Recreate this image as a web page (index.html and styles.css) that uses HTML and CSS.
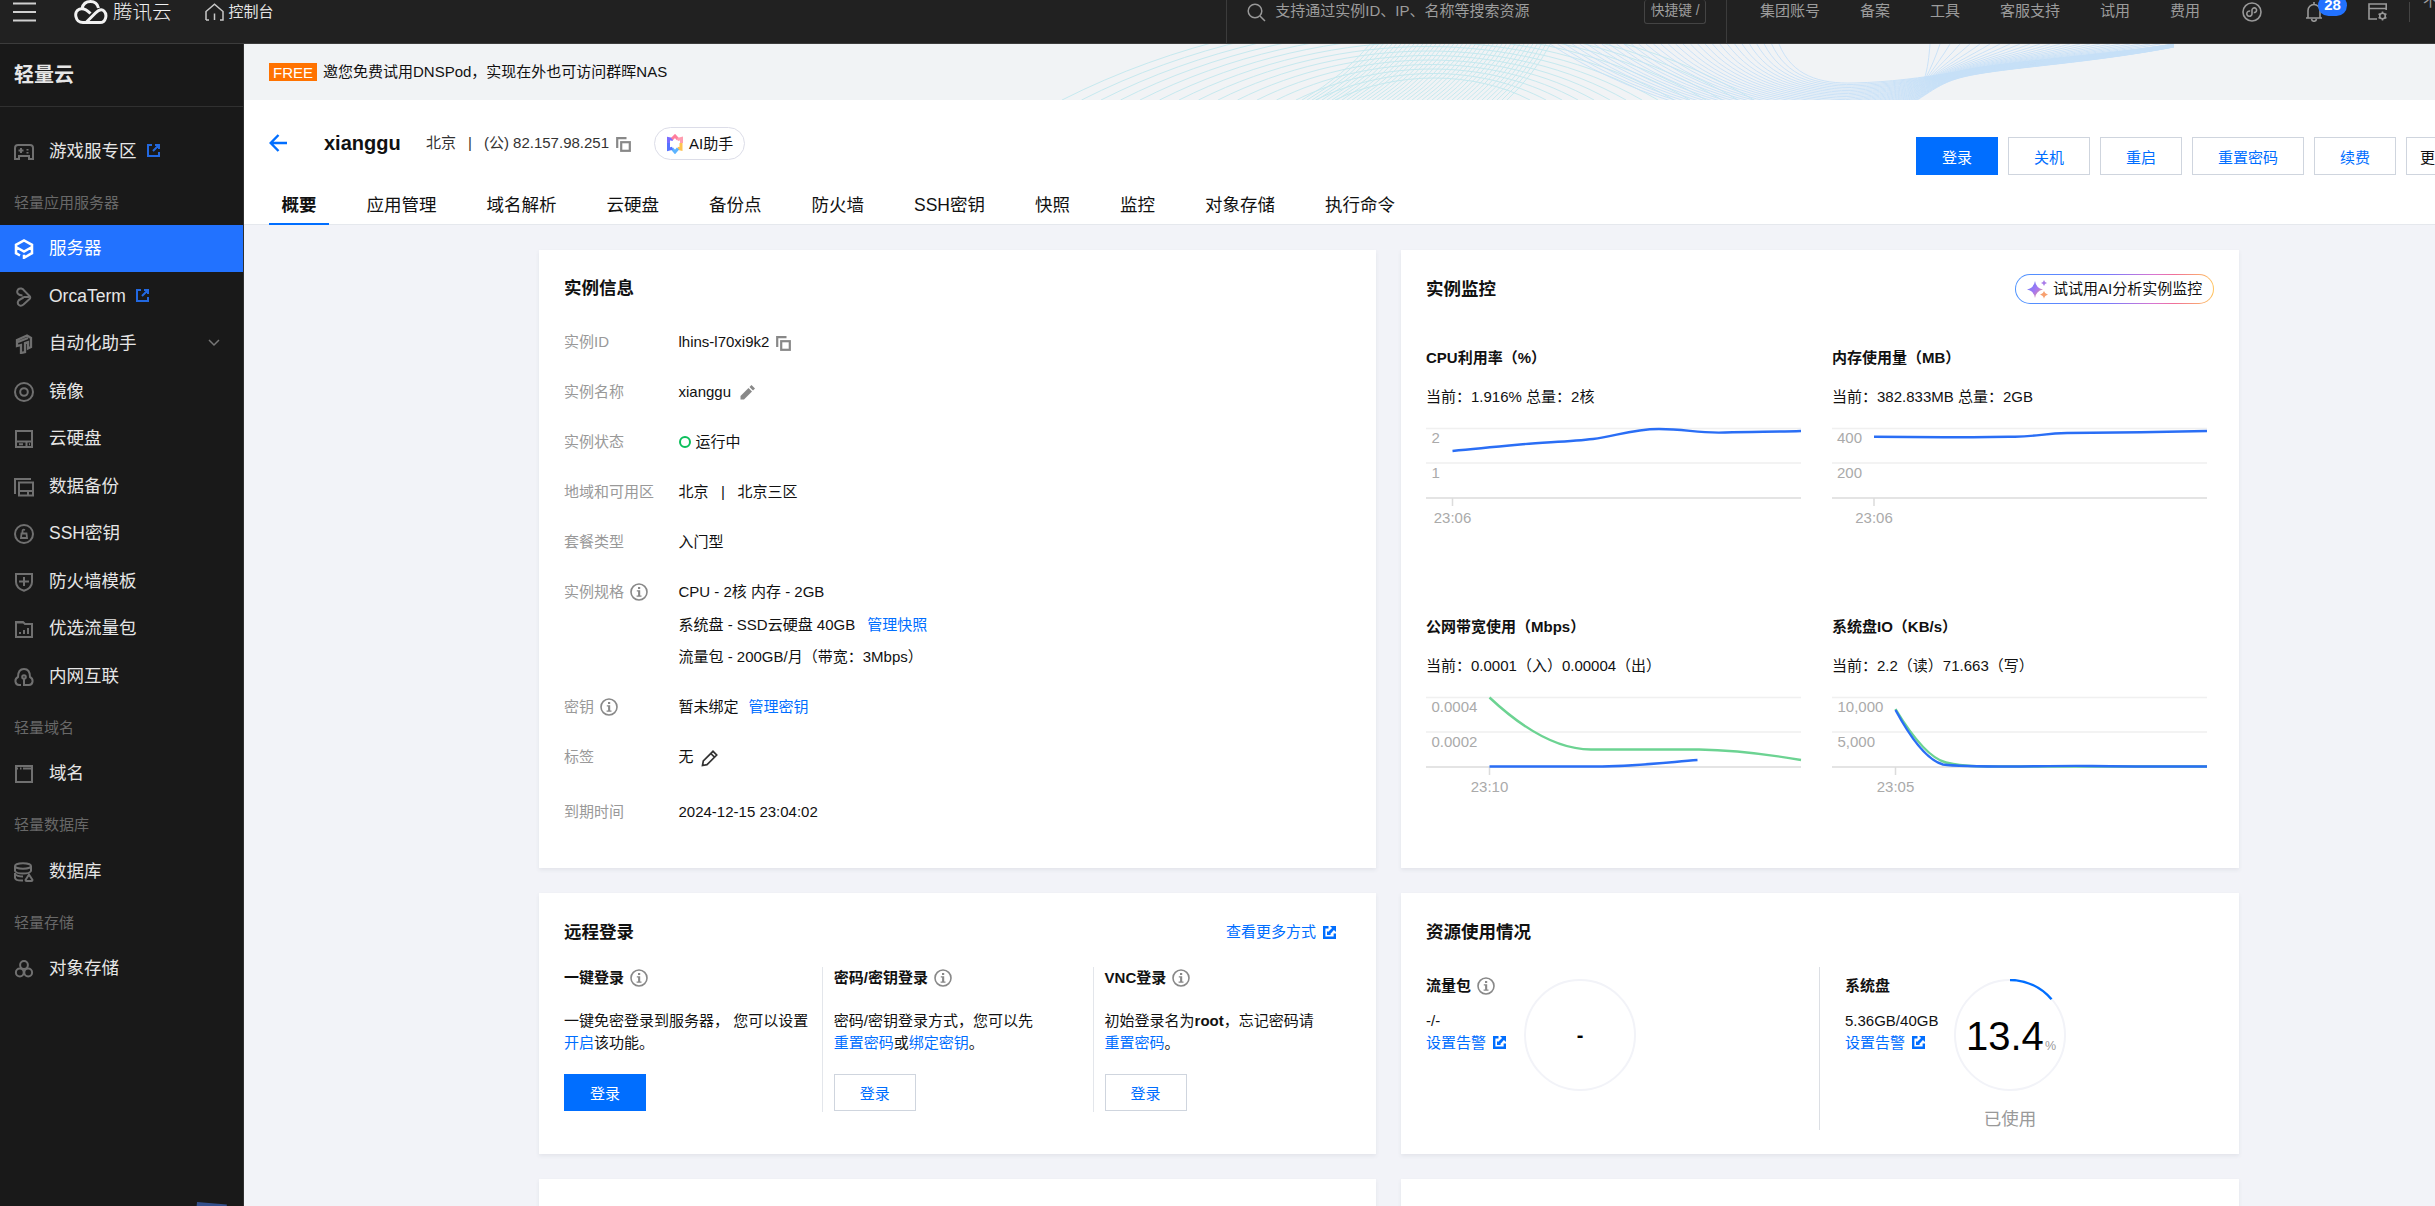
FILE: index.html
```html
<!DOCTYPE html>
<html lang="zh-CN">
<head>
    <meta charset="UTF-8">
    <meta name="viewport" content="width=device-width, initial-scale=1.0">
    <title>轻量云 - 控制台</title>
    <link rel="stylesheet" href="styles.css">
</head>
<body>
    <!-- shared icons -->
    <svg class="defs" width="0" height="0">
        <defs>
            <linearGradient id="gradAi" x1="0" y1="0" x2="1" y2="1">
                <stop offset="0" stop-color="#5b7cff"/>
                <stop offset="0.55" stop-color="#a878f0"/>
                <stop offset="1" stop-color="#ff9a5c"/>
            </linearGradient>
        </defs>
        <symbol id="i-info" viewBox="0 0 18 18">
            <circle cx="9" cy="9" r="8" fill="none" stroke="#888" stroke-width="1.6"/>
            <path d="M8 4h2.2v2H8zM6.8 7.3h3.4v5.2h1.3v1.3H6.6v-1.3h1.5V8.6H6.8z" fill="#888"/>
        </symbol>
        <symbol id="i-copy" viewBox="0 0 15 15">
            <path d="M1.2 11V1.2H10.5" fill="none" stroke="#888" stroke-width="2.2"/>
            <rect x="5.200" y="5.200" width="8.600" height="8.600" fill="none" stroke="#888" stroke-width="2.2"/>
        </symbol>
        <symbol id="i-out" viewBox="0 0 13 13">
            <path d="M5 1H1v11h11V8M8 1h4v4M12 1L6 7" fill="none" stroke="currentColor" stroke-width="2"/>
        </symbol>
        <symbol id="i-link" viewBox="0 0 13 13">
            <path d="M5.5 1.2H1.2v10.6h10.6V7.5" fill="none" stroke="currentColor" stroke-width="2.4"/>
            <path d="M7 0h6v6l-2.1-2.1-3.6 4L7.8 9H4V5.2l1.2.6 3.9-3.7z" fill="currentColor"/>
        </symbol>
    </svg>

    <header class="topbar">
        <div class="topbar-left">
            <svg class="burger" width="23" height="20" viewBox="0 0 23 20"><path d="M0 1.5h23M0 10h23M0 18.5h23" stroke="#d0d0d0" stroke-width="2"/></svg>
            <svg class="logo" width="34" height="25" viewBox="0 0 34 25"><path d="M8 8.5C9 4 12.5 1.5 16.5 1.5s7 2.5 8 6.5M12 22.5L21.500 13c3-3 6-4.500 8.500-2 3.500 3.500 2 11.500-4 11.500H9C1 22.500-.5 11.500 5 9.300c4.500-1.800 8 .7 11.500 4.200" fill="none" stroke="#f2f2f2" stroke-width="3" stroke-linejoin="round"/></svg>
            <span class="brand">腾讯云</span>
            <svg class="home" width="19" height="18" viewBox="0 0 19 18"><path d="M1 17V8.500L9.500 1.200 18 8.500V17h-3M1 17h3M9.500 10.500V17" fill="none" stroke="#c8c8c8" stroke-width="1.500"/></svg>
            <span class="console">控制台</span>
        </div>
        <div class="search">
            <svg width="19" height="19" viewBox="0 0 19 19"><circle cx="8" cy="8" r="6.800" fill="none" stroke="#999" stroke-width="1.500"/><path d="M13 13l5 5" stroke="#999" stroke-width="1.500"/></svg>
            <span class="search-text">支持通过实例ID、IP、名称等搜索资源</span>
            <span class="hotkey">快捷键 /</span>
        </div>
        <nav class="topnav">
            <span>集团账号</span>
            <span>备案</span>
            <span>工具</span>
            <span>客服支持</span>
            <span>试用</span>
            <span>费用</span>
        </nav>
        <div class="tools">
            <svg width="20" height="20" viewBox="0 0 20 20" fill="none" stroke="#999" stroke-width="1.600"><circle cx="10" cy="10" r="9"/><path d="M8.200 9.200a2.600 2.600 0 1 0 1.800 2.500V7.800a2.300 2.300 0 1 1 1.800 2.600"/></svg>
            <div class="bell">
                <svg width="18" height="20" viewBox="0 0 18 20" fill="none" stroke="#999" stroke-width="1.600"><path d="M1 16h16M3 16V8.500a6 6 0 0 1 12 0V16M9 0v3M6.500 17c.5 3 4.500 3 5 0"/></svg>
                <span class="badge">28</span>
            </div>
            <svg width="20" height="18" viewBox="0 0 20 18" fill="none" stroke="#999" stroke-width="1.600"><path d="M18.200 7V1H1v15h8M1 5.500h17"/><circle cx="14.500" cy="13" r="2.800"/><path d="M14.500 8.500v1.700M14.500 15.800v1.700M10.600 10.800l1.500.9M16.900 14.400l1.500.8M10.600 15.200l1.500-.9M16.900 11.600l1.500-.8"/></svg>
            <i class="sep"></i>
            <span class="clip">不</span>
        </div>
    </header>

    <div class="layout">
        <aside class="sidebar">
            <div class="side-title">轻量云</div>
            <ul class="menu">
                <li>
                    <svg viewBox="0 0 20 20"><path d="M4 3h12q3 0 3 3v11h-4v-3H5v3H1V6q0-3 3-3zM4.500 8.500h5M7 6v5M13.500 7v1.500M13.500 10v1.500"/></svg>
                    <span>游戏服专区</span><svg class="out"><use href="#i-out"/></svg>
                </li>
                <li class="group">轻量应用服务器</li>
                <li class="active">
                    <svg viewBox="0 0 20 20"><path d="M6 16.500l-4-2.300V5.800L10 1.500l8 4.300v8.400l-8 4.600v-3M2 8l8 4.500L18 8" stroke-width="2.500"/></svg>
                    <span>服务器</span>
                </li>
                <li>
                    <svg viewBox="0 0 20 20"><path d="M8.500 8.500C4 8.500 2 5.500 4 2.500c2-2 5-1 6.500 1.500l5 5q1.500 1.500 0 3l-6 5.500c-3 2.500-6.500.5-5.500-3 1-3 4.500-2 6-5M10 10h5"/></svg>
                    <span>OrcaTerm</span><svg class="out"><use href="#i-out"/></svg>
                </li>
                <li>
                    <svg viewBox="0 0 20 20"><path d="M3 6l10-4.500L17 4v9l-3 1.500V8l-3 1v9l-4 1v-8l-4 1zM4 8l10-4"  stroke-width="2.300"/></svg>
                    <span>自动化助手</span>
                    <svg class="arrow" viewBox="0 0 12 8"><path d="M1 1l5 5 5-5"/></svg>
                </li>
                <li>
                    <svg viewBox="0 0 20 20"><circle cx="10" cy="10" r="9"/><circle cx="10" cy="10" r="3.800"/></svg>
                    <span>镜像</span>
                </li>
                <li>
                    <svg viewBox="0 0 20 20"><path d="M2 2h16v16H2zM2 12.500h16M12.500 13v5M5 15.300h4M15 15.300h1"/></svg>
                    <span>云硬盘</span>
                </li>
                <li>
                    <svg viewBox="0 0 20 20"><path d="M1 17V2h16M5 5.500h14v13H5zM5 14h14M14 14v4"/></svg>
                    <span>数据备份</span>
                </li>
                <li>
                    <svg viewBox="0 0 20 20"><circle cx="10" cy="10" r="9"/><path d="M7.500 9.500h5L13 14H7zM8.500 9V7q0-2 2.500-1" stroke-width="1.800"/></svg>
                    <span>SSH密钥</span>
                </li>
                <li>
                    <svg viewBox="0 0 20 20"><path d="M2 2h16v8q0 6-8 8.800Q2 16 2 10zM5 9.500h10M10 5v9"/></svg>
                    <span>防火墙模板</span>
                </li>
                <li>
                    <svg viewBox="0 0 20 20"><path d="M2 18V3h7l2 2h7v13zM2 3.500h7M6 15v-2M10 15v-4M14 15V9"/></svg>
                    <span>优选流量包</span>
                </li>
                <li>
                    <svg viewBox="0 0 20 20"><path d="M7 18H5c-4 0-5-6-1-8 0-5 2-8 6-8s6 3 6 8c4 2 3 8-1 8h-5v-7"/><circle cx="10" cy="10" r="1.800"/></svg>
                    <span>内网互联</span>
                </li>
                <li class="group">轻量域名</li>
                <li>
                    <svg viewBox="0 0 20 20"><path d="M2 2h16v16H2zM2 4.500h2M6 4.500h1.500M9 4.500h9"/></svg>
                    <span>域名</span>
                </li>
                <li class="group">轻量数据库</li>
                <li>
                    <svg viewBox="0 0 20 20"><ellipse cx="9" cy="4" rx="8" ry="2.800"/><path d="M1 4v5q1 2.500 8 2.500T17 9V4M1 11v5q1 3 8 2.500M1 12q2 2.500 8 2.500M15 12.500l-3.500 5.500q0 1 1 1h5q1 0 1-1z"/></svg>
                    <span>数据库</span>
                </li>
                <li class="group">轻量存储</li>
                <li>
                    <svg viewBox="0 0 20 20"><circle cx="10" cy="6" r="3.900"/><circle cx="5.800" cy="13.500" r="3.900"/><circle cx="14.200" cy="13.500" r="3.900"/></svg>
                    <span>对象存储</span>
                </li>
            </ul>
            <div class="float-tip"></div>
        </aside>

        <main class="main">
            <div class="banner">
                <svg id="waves" class="waves" width="1150" height="56" viewBox="1050 44 1150 56"></svg>
                <span class="free">FREE</span>
                <span class="banner-text">邀您免费试用DNSPod，实现在外也可访问群晖NAS</span>
            </div>

            <div class="page-head">
                <div class="head-row">
                    <svg class="back" width="18" height="18" viewBox="0 0 18 18"><path d="M18 9H2M9.500 1L1.700 9l7.800 8" fill="none" stroke="#006eff" stroke-width="2.400"/></svg>
                    <h1>xianggu</h1>
                    <div class="region"><span>北京</span><span>|</span><span>(公) 82.157.98.251</span></div>
                    <svg class="copy"><use href="#i-copy"/></svg>
                    <div class="ai-btn">
                        <svg width="18" height="20" viewBox="0 0 18 20" fill="none" stroke-width="3">
                            <path d="M2.500 9V4.500L7 5.500" stroke="#7a6cff"/><path d="M6 5l3-3 3 3.200" stroke="#ff7d9c"/>
                            <path d="M11.500 5.500l4-1V9" stroke="#ff9db0"/><path d="M15 9v6l-3.500-.8" stroke="#ffc24f"/>
                            <path d="M12 14.500l-3 3.500-3-3.500" stroke="#5cb4ff"/><path d="M6.500 14.300l-4 1V9" stroke="#5673ff"/>
                        </svg>
                        <span>AI助手</span>
                    </div>
                    <div class="actions">
                        <button class="btn primary">登录</button>
                        <button class="btn">关机</button>
                        <button class="btn">重启</button>
                        <button class="btn">重置密码</button>
                        <button class="btn">续费</button>
                        <button class="btn more">更</button>
                    </div>
                </div>
                <div class="tabs">
                    <span class="tab on">概要</span>
                    <span class="tab">应用管理</span>
                    <span class="tab">域名解析</span>
                    <span class="tab">云硬盘</span>
                    <span class="tab">备份点</span>
                    <span class="tab">防火墙</span>
                    <span class="tab">SSH密钥</span>
                    <span class="tab">快照</span>
                    <span class="tab">监控</span>
                    <span class="tab">对象存储</span>
                    <span class="tab">执行命令</span>
                </div>
            </div>

            <div class="cards">
                <section class="card info-card">
                    <h3>实例信息</h3>
                    <div class="row"><label>实例ID</label><div>lhins-l70xi9k2<svg class="copy"><use href="#i-copy"/></svg></div></div>
                    <div class="row"><label>实例名称</label><div>xianggu<svg class="pen" width="15" height="15" viewBox="0 0 15 15"><path d="M.5 14.500V11l8-8L12 6.500l-8 8zM9.500 2L11.500 0 15 3.500l-2 2z" fill="#888"/></svg></div></div>
                    <div class="row"><label>实例状态</label><div><i class="dot"></i>运行中</div></div>
                    <div class="row"><label>地域和可用区</label><div>北京 &nbsp; | &nbsp; 北京三区</div></div>
                    <div class="row"><label>套餐类型</label><div>入门型</div></div>
                    <div class="row spec"><label>实例规格<svg class="info"><use href="#i-info"/></svg></label>
                        <div>
                            <p>CPU - 2核 内存 - 2GB</p>
                            <p>系统盘 - SSD云硬盘 40GB<a class="gap-link">管理快照</a></p>
                            <p>流量包 - 200GB/月（带宽：3Mbps）</p>
                        </div>
                    </div>
                    <div class="row"><label>密钥<svg class="info"><use href="#i-info"/></svg></label><div>暂未绑定<a class="key-link">管理密钥</a></div></div>
                    <div class="row tag"><label>标签</label><div>无<svg class="pen2" width="17" height="17" viewBox="0 0 17 17"><path d="M1.500 15.500l.8-4.500L12 1.300l3.700 3.700L6 14.700zM9.800 3.500l3.700 3.700" fill="none" stroke="#333" stroke-width="1.700"/></svg></div></div>
                    <div class="row"><label>到期时间</label><div>2024-12-15 23:04:02</div></div>
                </section>

                <section class="card monitor-card">
                    <div class="card-head">
                        <h3>实例监控</h3>
                        <div class="ai-pill">
                            <svg width="21" height="19" viewBox="0 0 21 19"><path d="M8 1q1 7 8 8.500-7 1.500-8 8.500-1-7-8-8.500Q7 8 8 1z" fill="url(#gradAi)"/><path d="M17 0q.5 2.500 3 3-2.500.5-3 3-.5-2.500-3-3 2.500-.5 3-3z" fill="#a97be8"/><path d="M17 11q.7 3 4 3.800-3.300.7-4 3.900-.7-3.200-4-3.900 3.300-.8 4-3.800z" fill="#f7a06f"/></svg>
                            <span>试试用AI分析实例监控</span>
                        </div>
                    </div>
                    <div class="charts">
                        <div class="chart">
                            <h4>CPU利用率（%）</h4>
                            <p>当前：1.916% 总量：2核</p>
                            <svg width="376" height="110" viewBox="0 0 376 110">
                                <path class="grid" d="M0 8.500h375M0 43h375"/><path class="axis" d="M0 78h375M26.500 78v8"/>
                                <text x="5.500" y="23">2</text><text x="5.500" y="58">1</text><text x="26.500" y="103" text-anchor="middle">23:06</text>
                                <path class="blue" d="M26.500 31C50 28.500 72 26.500 94 24.500S145 21.500 167 19 205 9 233 9s38 4.500 66 3.500 50-.5 76-1.500"/>
                            </svg>
                        </div>
                        <div class="chart">
                            <h4>内存使用量（MB）</h4>
                            <p>当前：382.833MB 总量：2GB</p>
                            <svg width="376" height="110" viewBox="0 0 376 110">
                                <path class="grid" d="M0 8.500h375M0 43h375"/><path class="axis" d="M0 78h375M42 78v8"/>
                                <text x="5" y="23">400</text><text x="5" y="58">200</text><text x="42" y="103" text-anchor="middle">23:06</text>
                                <path class="blue" d="M42 16.700L112 17.300C140 17.300 160 17 183 16.700S212 13.500 235 13L309 12.200 375 11"/>
                            </svg>
                        </div>
                        <div class="chart">
                            <h4>公网带宽使用（Mbps）</h4>
                            <p>当前：0.0001（入）0.00004（出）</p>
                            <svg width="376" height="110" viewBox="0 0 376 110">
                                <path class="grid" d="M0 8.500h375M0 43h375"/><path class="axis" d="M0 78h375M63.500 78v8"/>
                                <text x="5.500" y="23">0.0004</text><text x="5.500" y="58">0.0002</text><text x="63.500" y="103" text-anchor="middle">23:10</text>
                                <path class="green" d="M63.500 8.500C95 38 130 60.500 165 60.500H273C310 61 340 65 375 71"/>
                                <path class="blue" d="M63.500 77.500H170C205 77.500 235 74 271.500 71"/>
                            </svg>
                        </div>
                        <div class="chart">
                            <h4>系统盘IO（KB/s）</h4>
                            <p>当前：2.2（读）71.663（写）</p>
                            <svg width="376" height="110" viewBox="0 0 376 110">
                                <path class="grid" d="M0 8.500h375M0 43h375"/><path class="axis" d="M0 78h375M63.500 78v8"/>
                                <text x="5.500" y="23">10,000</text><text x="5.500" y="58">5,000</text><text x="63.500" y="103" text-anchor="middle">23:05</text>
                                <path class="green" d="M63.500 20C78 44 96 69 114 73.500S150 77.500 180 77.500H375"/>
                                <path class="blue" d="M63.500 21C77 46 94 71 111 75.500 125 77.500 160 77.500 180 77.500S230 76.500 260 77 330 77.500 375 77.500"/>
                            </svg>
                        </div>
                    </div>
                </section>

                <section class="card">
                    <div class="card-head">
                        <h3>远程登录</h3>
                        <a class="more-link">查看更多方式<svg class="ext"><use href="#i-link"/></svg></a>
                    </div>
                    <div class="logins">
                        <div class="login">
                            <h4>一键登录<svg class="info"><use href="#i-info"/></svg></h4>
                            <p>一键免密登录到服务器， 您可以设置<br><a>开启</a>该功能。</p>
                            <button class="btn primary">登录</button>
                        </div>
                        <div class="login">
                            <h4>密码/密钥登录<svg class="info"><use href="#i-info"/></svg></h4>
                            <p>密码/密钥登录方式，您可以先<br><a>重置密码</a>或<a>绑定密钥</a>。</p>
                            <button class="btn">登录</button>
                        </div>
                        <div class="login">
                            <h4>VNC登录<svg class="info"><use href="#i-info"/></svg></h4>
                            <p>初始登录名为<b>root</b>，忘记密码请<br><a>重置密码</a>。</p>
                            <button class="btn">登录</button>
                        </div>
                    </div>
                </section>

                <section class="card">
                    <div class="card-head"><h3>资源使用情况</h3></div>
                    <div class="usage">
                        <div class="use-item">
                            <div class="use-text">
                                <h4>流量包<svg class="info"><use href="#i-info"/></svg></h4>
                                <p>-/-<br><a>设置告警<svg class="ext"><use href="#i-link"/></svg></a></p>
                            </div>
                            <div class="ring-box">
                                <svg width="112" height="112" viewBox="0 0 112 112">
                                    <circle class="ring" cx="56" cy="56" r="55"/>
                                    <text class="dash" x="56" y="63" text-anchor="middle">-</text>
                                </svg>
                            </div>
                        </div>
                        <div class="use-item">
                            <div class="use-text">
                                <h4>系统盘</h4>
                                <p>5.36GB/40GB<br><a>设置告警<svg class="ext"><use href="#i-link"/></svg></a></p>
                            </div>
                            <div class="ring-box">
                                <svg width="112" height="112" viewBox="0 0 112 112">
                                    <circle class="ring" cx="56" cy="56" r="55"/>
                                    <path class="ring-on" d="M56 1A55 55 0 0 1 97.500 20.200"/>
                                    <text class="num" x="12" y="71">13.4</text>
                                    <text class="pct" x="91" y="71">%</text>
                                </svg>
                                <span class="used">已使用</span>
                            </div>
                        </div>
                    </div>
                </section>

                <section class="card"></section>
                <section class="card"></section>
            </div>
        </main>
    </div>

    <script src="script.js"></script>
</body>
</html>
```

FILE: styles.css
```css
* {
    box-sizing: border-box;
}

body {
    margin: 0;
    width: 2435px;
    height: 1206px;
    overflow: hidden;
    background-color: #f2f3f8;
    font-family: "Liberation Sans", "Noto Sans CJK SC", sans-serif;
    font-size: 15px;
    line-height: 22px;
    color: #111;
}

h1, h3, h4, p, ul {
    margin: 0;
    padding: 0;
}

a {
    color: #006eff;
}

.defs {
    position: absolute;
}

/* top bar */
.topbar {
    display: flex;
    height: 44px;
    background-color: #212121;
    border-bottom: 1px solid #3c3c3c;
    color: #9c9c9c;
    white-space: nowrap;
}

.topbar-left {
    display: flex;
    align-items: center;
    width: 1227px;
    height: 24px;
    padding-left: 13px;
}

.logo {
    margin-left: 38px;
}

.brand {
    margin-left: 5px;
    font-size: 19.5px;
    font-weight: 300;
    color: #f0f0f0;
}

.home {
    margin-left: 33px;
}

.console {
    margin-left: 5px;
    color: #e4e4e4;
}

.search {
    display: flex;
    align-items: flex-start;
    width: 501px;
    height: 43px;
    padding-left: 20px;
    border-left: 1px solid #3c3c3c;
    border-right: 1px solid #3c3c3c;
}

.search > svg {
    margin-top: 3px;
}

.search-text {
    width: 369px;
    margin-left: 9px;
}

.hotkey {
    width: 62px;
    height: 24px;
    border: 1px solid #444;
    border-top: 0;
    border-radius: 3px;
    font-size: 13.75px;
    line-height: 21px;
    text-align: center;
}

.topnav {
    display: flex;
    gap: 40px;
    padding-left: 33px;
}

.tools {
    display: flex;
    align-items: center;
    height: 24px;
    margin-left: 42px;
}

.bell {
    position: relative;
    width: 18px;
    height: 20px;
    margin: 0 45px 0 43px;
}

.badge {
    position: absolute;
    left: 13px;
    top: -7px;
    width: 29px;
    height: 21px;
    border-radius: 11px;
    background-color: #2272ff;
    color: #fff;
    font-weight: bold;
    line-height: 19px;
    text-align: center;
}

.sep {
    width: 1px;
    height: 20px;
    margin-left: 21px;
    background-color: #444;
}

.clip {
    width: 12px;
    margin: -22px 0 0 13px;
    overflow: hidden;
}

/* sidebar */
.layout {
    display: flex;
    height: 1162px;
    overflow: hidden;
}

.sidebar {
    position: relative;
    flex: none;
    width: 244px;
    overflow: hidden;
    background-color: #191919;
    border-right: 1px solid #303030;
    color: #e6e6e6;
}

.side-title {
    height: 63px;
    padding-left: 14px;
    border-bottom: 1px solid #303030;
    font-size: 20px;
    font-weight: bold;
    line-height: 62px;
}

.menu {
    padding-top: 20px;
    list-style: none;
}

.menu li {
    display: flex;
    align-items: center;
    height: 47.5px;
    padding: 0 23px 0 14px;
    font-size: 17.5px;
}

.menu li > svg:first-child {
    width: 20px;
    height: 20px;
    margin: 2px 15px 0 0;
    fill: none;
    stroke: #707070;
    stroke-width: 2;
}

.menu li.group {
    height: 50px;
    padding-top: 6px;
    font-size: 15px;
    color: #686868;
}

.menu li.active {
    background-color: #2272ff;
    color: #fff;
}

.menu li.active > svg:first-child {
    stroke: #fff;
}

.menu .out {
    width: 13px;
    height: 13px;
    margin-left: 10px;
    color: #2268e0;
}

.menu .arrow {
    width: 12px;
    height: 8px;
    margin-left: auto;
    fill: none;
    stroke: #777;
    stroke-width: 1.5;
}

.float-tip {
    position: absolute;
    left: 197px;
    top: 1158px;
    width: 30px;
    height: 20px;
    background-color: #34508c;
    transform: rotate(5deg);
    transform-origin: 0 0;
}

/* banner */
.main {
    flex: 1;
    min-width: 0;
}

.banner {
    position: relative;
    display: flex;
    align-items: center;
    height: 56px;
    padding-left: 25px;
    background-color: #f1f3f5;
}

.waves {
    position: absolute;
    left: 806px;
    top: 0;
    fill: none;
}

.waves .teal {
    stroke: #c6e9ef;
}

.waves .sky {
    stroke: #c6e0f7;
    stroke-width: 0.9;
}

.free {
    width: 48px;
    height: 18px;
    margin-right: 6px;
    background-color: #ff7200;
    color: #fff;
    line-height: 19px;
    text-align: center;
}

/* page head */
.page-head {
    height: 125px;
    padding-left: 25px;
    background-color: #fff;
    border-bottom: 1px solid #e5e8ed;
}

.head-row {
    display: flex;
    align-items: center;
    height: 85px;
    white-space: nowrap;
}

.head-row > * {
    flex: none;
}

h1 {
    width: 102px;
    margin-left: 37px;
    font-size: 20px;
}

.region {
    display: flex;
    gap: 12px;
    width: 184px;
    margin-right: 6px;
    color: #333;
}

.copy {
    width: 15px;
    height: 15px;
}

.head-row .copy {
    margin-top: 3px;
}

.ai-btn {
    display: flex;
    align-items: center;
    width: 91px;
    height: 33px;
    margin: 2px 0 0 23px;
    padding-left: 11px;
    border: 1px solid #dcdde8;
    border-radius: 17px;
}

.ai-btn span {
    margin-left: 5px;
}

.actions {
    display: flex;
    gap: 10px;
    margin: 27px 0 0 1171px;
}

.btn {
    flex: none;
    height: 38px;
    padding: 0 25px;
    border: 1px solid #cfd5de;
    background-color: #fff;
    color: #006eff;
    font-family: inherit;
    font-size: 15px;
}

.btn.primary {
    border-color: #006eff;
    background-color: #006eff;
    color: #fff;
}

.btn.more {
    width: 60px;
    padding: 0 13px;
    color: #111;
    text-align: left;
}

.tabs {
    display: flex;
    gap: 25px;
}

.tab {
    height: 40px;
    padding: 0 12.5px;
    font-size: 17.5px;
    line-height: 40px;
}

.tab.on {
    border-bottom: 2px solid #006eff;
    font-weight: bold;
}

/* cards */
.cards {
    display: grid;
    grid-template-columns: 837px 838px;
    grid-template-rows: 618px 261px 261px;
    gap: 25px;
    padding: 25px 0 0 295px;
}

.card {
    padding: 25px;
    background-color: #fff;
    box-shadow: 0 2px 4px rgba(54, 58, 80, 0.08);
}

h3 {
    font-size: 17.5px;
    line-height: 26px;
}

h4 {
    font-size: 15px;
    line-height: 22px;
}

.row {
    display: flex;
    margin-bottom: 28px;
}

h3 + .row {
    margin-top: 30px;
}

.row label {
    display: flex;
    align-items: center;
    width: 114.5px;
    height: 22px;
    color: #999;
}

.row > div {
    display: flex;
    align-items: center;
}

.row .copy {
    margin: 3px 0 0 7px;
}

.info {
    width: 18px;
    height: 18px;
    margin-left: 6px;
}

.pen {
    margin-left: 9px;
}

.pen2 {
    margin: 3px 0 0 7px;
}

.dot {
    width: 12px;
    height: 12px;
    margin-right: 5px;
    border: 2px solid #0abf5b;
    border-radius: 50%;
}

.row.spec > div {
    display: block;
}

.spec p + p {
    margin-top: 10.5px;
}

.row.tag {
    margin-bottom: 33px;
}

.gap-link {
    margin-left: 12px;
}

.key-link {
    margin-left: 10px;
}

.card-head {
    display: flex;
    align-items: center;
    justify-content: space-between;
    height: 28px;
}

.ai-pill {
    display: flex;
    align-items: center;
    width: 199px;
    height: 30px;
    padding-left: 11px;
    border: 1px solid transparent;
    border-radius: 15px;
    background: linear-gradient(#fff, #fff) padding-box, linear-gradient(90deg, #4d94ff, #6e7bff 45%, #d975d0 70%, #f0709a 80%, #ffc45c) border-box;
}

.ai-pill span {
    margin-left: 5px;
    white-space: nowrap;
}

.charts {
    display: grid;
    grid-template-columns: 406px 376px;
    grid-auto-rows: 268.5px;
    padding-top: 44px;
}

.chart p {
    margin: 17px 0 12px;
}

.chart svg {
    display: block;
}

.chart text {
    font-size: 15px;
    fill: #aaa;
}

.grid {
    stroke: #f0f0f0;
    stroke-width: 1.5;
}

.axis {
    stroke: #dcdcdc;
    stroke-width: 1.5;
}

.blue, .green {
    fill: none;
    stroke: #2a6ef5;
    stroke-width: 2.4;
}

.green {
    stroke: #6cd392;
}

.more-link {
    display: flex;
    align-items: center;
    margin-right: 15px;
}

.ext {
    width: 13px;
    height: 13px;
    margin-left: 7px;
}

.logins {
    display: flex;
    margin-top: 21px;
}

.login {
    flex: none;
    width: 269.8px;
    height: 145px;
    padding-right: 10px;
    white-space: nowrap;
}

.login + .login {
    margin-left: -12px;
    padding-left: 11px;
    width: 282.8px;
    border-left: 1px solid #e3e6eb;
}

.login + .login:last-child {
    width: 250px;
}

.login h4, .use-text h4 {
    display: flex;
    align-items: center;
}

.login p {
    margin: 21px 0 20px;
}

.login .btn {
    width: 82px;
    height: 37px;
}

/* usage rings */
.usage {
    display: flex;
    height: 163px;
    margin-top: 21px;
}

.use-item {
    display: flex;
    width: 393px;
}

.use-item + .use-item {
    padding-left: 25px;
    border-left: 1px solid #dcdfe4;
}

.use-text {
    width: 98px;
    padding-top: 8px;
    white-space: nowrap;
}

.use-item + .use-item .use-text {
    width: 109px;
}

.use-text p {
    margin-top: 13px;
}

.use-text .ext {
    vertical-align: -1px;
}

.ring-box {
    display: flex;
    flex-direction: column;
    align-items: center;
    padding-top: 12px;
}

.ring {
    fill: none;
    stroke: #f2f3f8;
    stroke-width: 2;
}

.ring-on {
    fill: none;
    stroke: #006eff;
    stroke-width: 2.5;
}

.dash {
    font-size: 20px;
    font-weight: bold;
}

.num {
    font-size: 40px;
}

.pct {
    font-size: 12.5px;
    fill: #999;
}

.used {
    margin-top: 17px;
    font-size: 17.5px;
    color: #999;
}
```

FILE: script.js
```js
// Thin line pattern behind the banner
var waves = document.getElementById('waves');
var ns = 'http://www.w3.org/2000/svg';

function addLine(cls, d) {
    var p = document.createElementNS(ns, 'path');
    p.setAttribute('class', cls);
    p.setAttribute('d', d);
    waves.appendChild(p);
}

function mix(a, b, t) {
    return (a + (b - a) * t).toFixed(1);
}

var i, t;

// arches
for (i = 0; i < 15; i++) {
    var left = 1335 - i * 19.5;
    var right = 1530 + i * 16;
    var cy = (78 - i * 4.5 - 25) / 0.75;
    addLine('teal', 'M' + left + ' 100C' + mix(left, 1436, 0.6) + ' ' + cy + ' ' + mix(right, 1436, 0.6) + ' ' + cy + ' ' + right + ' 100');
}

// steep lines under the arches
for (i = 0; i < 42; i++) {
    addLine('teal', 'M' + (1302 + i * 5) + ' 100Q' + (1345 + i * 4.6) + ' 75 ' + (1370 + i * 4.4) + ' 44');
}

// descent into the trough, then up to the tip
for (i = 0; i < 32; i++) {
    t = i / 31;
    addLine('sky', 'M' + mix(1779, 1550, t) + ' 44C' + mix(1792, 1620, t) + ' ' + mix(76, 90, t) + ' ' + mix(1820, 1720, t) + ' ' + mix(84, 125, t) + ' ' +
        mix(1854, 1830, t) + ' ' + mix(83, 130, t) + 'C' + mix(1890, 1910, t) + ' ' + mix(82, 120, t) + ' 1920 ' + mix(78, 90, t) + ' 1956 ' + mix(72, 79, t) +
        'C1990 ' + mix(63, 68, t) + ' 2080 ' + mix(58, 65, t) + ' 2174 ' + mix(44, 47, t));
}

// fan on the right
for (i = 0; i < 24; i++) {
    addLine('sky', 'M' + (1930 + i * 10) + ' 44C' + (1929 + i * 7) + ' 56 ' + (1928 + i * 3) + ' ' + (68 - i * 0.2) + ' ' + (1924 + i * 0.8) + ' 80');
}
```
